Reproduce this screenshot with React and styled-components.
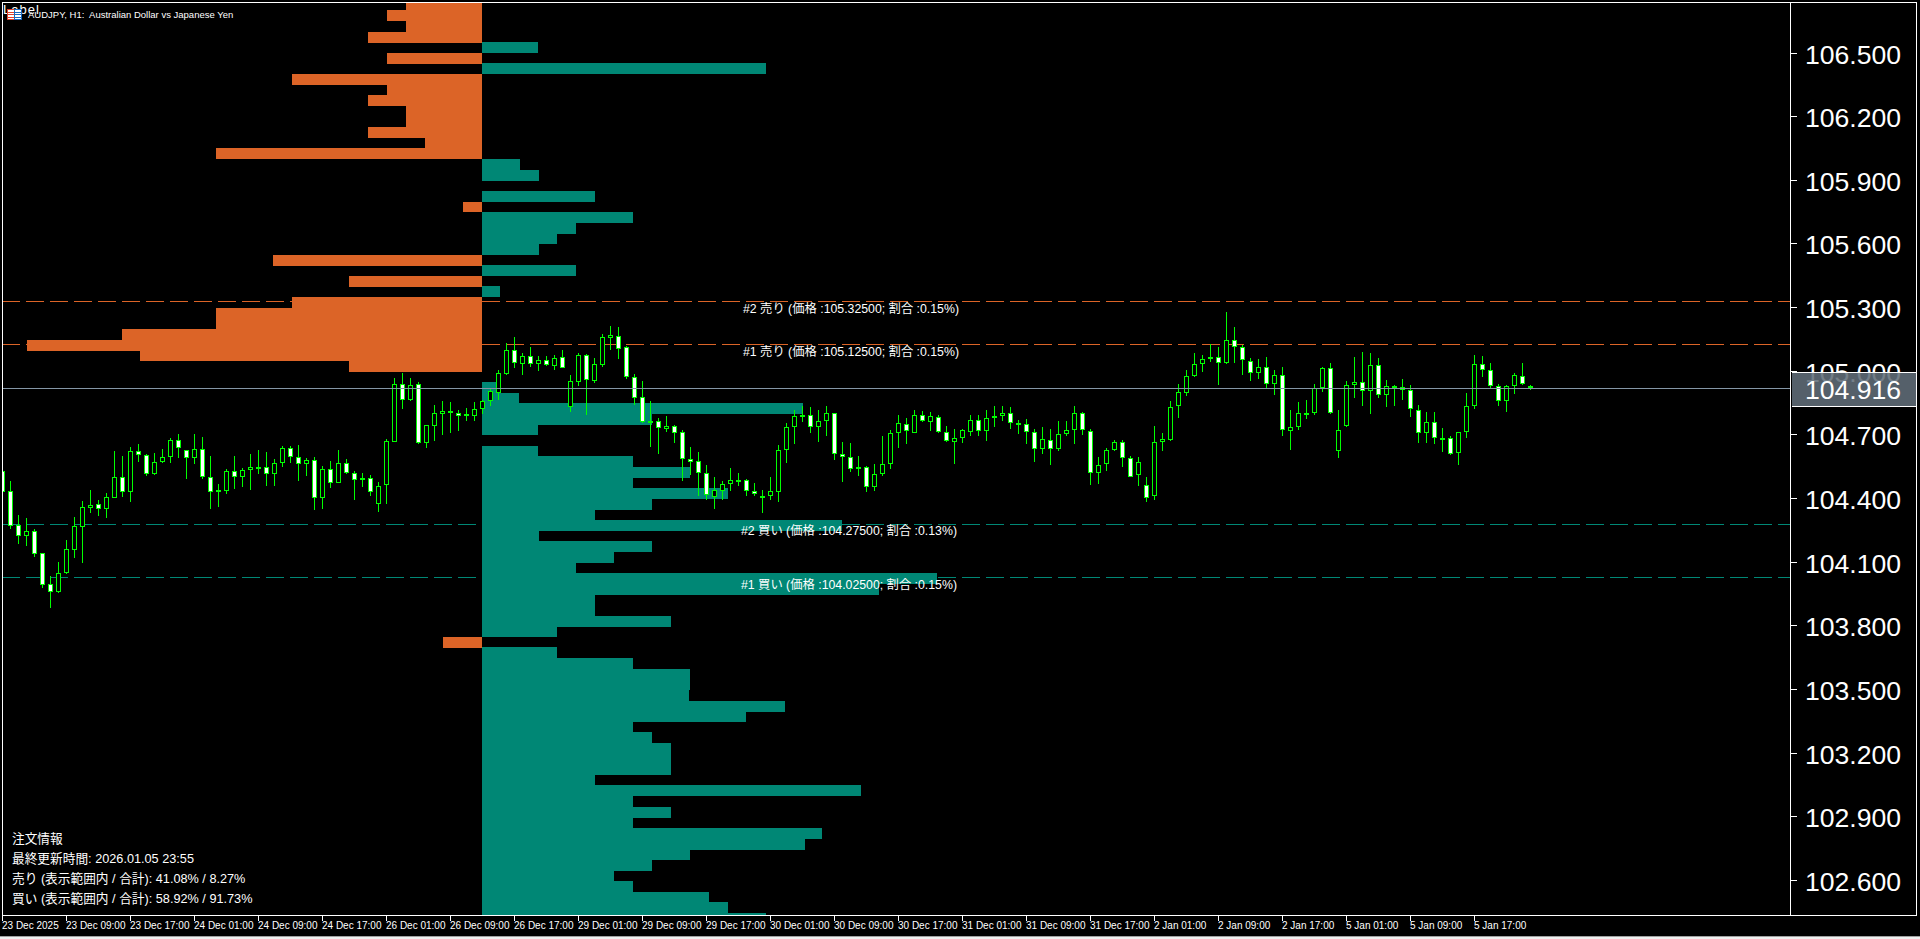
import React from "react";
import styled, { createGlobalStyle } from "styled-components";

const ORANGE = "#dc6427";
const TEAL = "#008775";
const LIME = "#00ff00";
const BAR_ORIGIN = 482;

// order book rows in page pixels: top, bottom, far edge. Edge left of origin = sell, right = buy
const bookRows = [
  [3, 10, 406], [10, 21, 387], [21, 32, 406], [32, 43, 368], [42, 53, 538], [53, 64, 387],
  [63, 74, 766], [74, 85, 292], [85, 95, 387], [95, 106, 368], [106, 127, 406], [127, 138, 368],
  [138, 148, 425], [148, 159, 216], [159, 170, 520], [170, 181, 539], [191, 202, 595], [202, 212, 463],
  [212, 223, 633], [223, 234, 576], [234, 244, 557], [244, 255, 539], [255, 266, 273], [265, 276, 576],
  [276, 287, 349], [286, 297, 500], [297, 308, 292], [308, 329, 216], [329, 340, 122], [340, 351, 27],
  [351, 361, 140], [361, 372, 349], [382, 393, 500], [393, 403, 519], [403, 414, 803], [414, 425, 652],
  [425, 435, 538], [446, 456, 538], [456, 467, 633], [467, 478, 690], [478, 488, 633], [488, 499, 728],
  [499, 510, 652], [510, 520, 595], [520, 531, 842], [531, 541, 539], [541, 552, 652], [552, 563, 614],
  [563, 573, 576], [573, 584, 937], [584, 595, 879], [595, 616, 595], [616, 627, 671], [627, 637, 557],
  [637, 648, 443], [647, 658, 557], [658, 669, 633], [669, 690, 690], [690, 701, 689], [701, 712, 785],
  [712, 722, 746], [722, 732, 633], [732, 743, 652], [743, 775, 671], [775, 785, 595], [785, 796, 861],
  [796, 807, 633], [807, 818, 671], [818, 828, 633], [828, 839, 822], [839, 850, 805], [850, 860, 690],
  [860, 871, 652], [871, 881, 614], [881, 892, 633], [892, 902, 709], [902, 913, 728], [913, 915, 766],
];

// wick top, wick bottom, body top, body bottom, kind (w = up bar, h = down bar)
// values are thirds of a pixel measured from the base line given below
const candlesFrom320 = `
453 515 453 515 w,483 627 514 617 w,585 672 616 647 w,594 678 634 647 h,627 711 634 701 w,
700 803 700 794 w,768 864 793 815 w,726 819 760 815 h,660 762 688 758 h,591 714 619 689 h,
543 729 562 620 h,510 579 556 563 h,540 588 553 568 w,519 594 532 568 h,393 534 472 533 h,
408 531 472 515 w,381 546 394 515 h,372 426 394 406 w,402 468 406 461 w,399 465 427 461 h,
387 429 412 427 h,354 429 361 412 h,342 414 361 385 w,390 477 391 415 w,342 432 388 415 h,
351 477 388 472 w,408 567 472 517 w,492 561 511 517 h,447 522 454 514 h,408 507 454 472 w,
444 501 451 472 h,402 510 442 451 h,390 462 442 443 h,396 498 442 463 w,417 498 430 463 h,
378 441 385 430 h,378 429 385 412 w,375 483 412 433 w,414 468 421 433 h,411 570 421 535 w,
438 567 448 535 h,423 504 448 490 w,390 488 430 488 h,417 463 430 460 w,454 540 460 481 w,
459 501 475 481 h,466 528 475 517 w,486 576 499 553 h,357 552 364 496 h,175 367 193 365 h,
159 267 193 239 w,174 243 196 239 h,186 372 193 368 w,315 384 316 368 h,255 363 280 317 h,
243 345 274 281 h,246 339 274 277 h,270 333 280 287 w,264 303 283 287 h,246 303 268 287 h,
240 283 244 268 h,207 258 214 244 h,150 240 160 218 h,69 165 91 161 h,51 144 91 128 w,
99 165 109 131 h,81 141 109 131 w,108 153 121 131 h,108 138 121 136 w,105 150 115 137 h,
90 144 112 143 w,165 276 184 260 h,99 198 106 185 h,103 285 106 181 w,114 189 133 182 h,
42 141 52 134 h,18 90 46 55 h,21 117 49 86 w,79 177 82 172 w,162 255 172 233 w,
183 309 232 305 w,243 381 304 308 h,294 402 304 325 w,288 336 319 326 h,315 369 319 338 w,
330 483 337 418 w,381 465 418 425 w,396 528 424 460 w,435 540 460 526 w,471 567 511 530 h,
483 540 493 512 h,444 513 481 493 h,459 498 481 482 h,477 528 481 514 w,489 528 514 523 w,
510 579 529 532 h,471 540 514 529 h,375 546 391 515 h,309 429 322 391 h,270 372 289 322 h`;

const candlesFrom280 = `
378 425 404 407 h,381 458 406 442 w,390 486 424 442 h,378 468 400 424 h,400 540 400 523 w,
486 606 523 532 w,489 576 532 568 w,528 588 562 568 h,558 636 562 620 w,552 633 583 620 h,
468 588 553 583 h,450 567 460 553 h,405 504 430 460 h,414 492 431 454 w,390 460 406 458 h,
393 426 406 424 w,396 453 409 425 h,405 459 412 457 w,438 486 455 484 w,447 552 475 487 h,
447 490 451 475 h,405 468 421 455 h,405 468 421 454 w,390 483 415 454 h,378 441 409 415 h,
378 423 400 409 h,381 447 400 430 w,420 462 430 433 h,417 492 433 457 w,448 546 457 508 w,
441 522 478 508 h,447 555 481 508 w,423 513 463 508 h,423 468 451 463 h,378 492 400 451 h,
396 466 400 451 w,447 615 454 580 w,531 612 556 580 h,504 573 511 553 h,480 514 487 511 h,
480 561 487 535 w,528 591 535 590 w,531 618 547 586 h,591 666 616 655 w,438 660 487 649 h,
459 514 478 487 h,363 483 382 481 h,312 414 337 379 h,270 348 289 340 h,220 290 253 289 h,
225 276 238 253 h,192 246 230 238 h,201 315 232 250 w,96 253 181 250 h,141 250 181 202 w,
196 286 202 241 w,235 302 244 280 w,238 298 262 280 h,232 324 262 313 w,270 345 286 313 h,
262 468 286 451 w,390 510 442 454 h,366 450 400 442 h,360 416 400 403 h,312 405 325 400 h,
262 336 265 325 h,250 402 265 400 w,391 534 451 514 h,304 440 316 439 h,232 354 307 316 h,
217 378 307 334 w,219 402 256 334 h,234 354 256 346 w,300 381 319 344 h,316 378 319 324 h,
297 360 322 331 w,315 411 331 388 w,375 489 391 460 w,396 489 427 460 h,396 492 427 475 w,
444 516 475 477 h,468 526 475 523 w,456 555 457 520 h,340 474 379 457 h,225 386 253 379 h,
228 292 253 271 w,250 328 271 319 w,312 378 319 364 w,315 396 319 364 h,280 342 286 319 h`;

const candlesEnd320 = `130 194 167 193 w,196 210 197 205 w`;

const parseCandles = (text, base) =>
  text
    .split(",")
    .map((item) => item.trim())
    .filter(Boolean)
    .map((item) => {
      const parts = item.split(" ");
      const [wickTop, wickBottom, bodyTop, bodyBottom] = parts.slice(0, 4).map((v) => Math.round(base + Number(v) / 3));
      return { wickTop, wickBottom, bodyTop, bodyBottom, up: parts[4] === "w" };
    });

const candles = [
  ...parseCandles(candlesFrom320, 320),
  ...parseCandles(candlesFrom280, 280),
  ...parseCandles(candlesEnd320, 320),
];

const priceLabels = ["106.500", "106.200", "105.900", "105.600", "105.300", "105.000", "104.700", "104.400", "104.100", "103.800", "103.500", "103.200", "102.900", "102.600"];

const timeLabels = ["23 Dec 2025", "23 Dec 09:00", "23 Dec 17:00", "24 Dec 01:00", "24 Dec 09:00", "24 Dec 17:00", "26 Dec 01:00", "26 Dec 09:00", "26 Dec 17:00", "29 Dec 01:00", "29 Dec 09:00", "29 Dec 17:00", "30 Dec 01:00", "30 Dec 09:00", "30 Dec 17:00", "31 Dec 01:00", "31 Dec 09:00", "31 Dec 17:00", "2 Jan 01:00", "2 Jan 09:00", "2 Jan 17:00", "5 Jan 01:00", "5 Jan 09:00", "5 Jan 17:00"];

const orderLines = [
  { y: 301, color: ORANGE, labelLeft: 743, labelTop: 301, text: "#2 売り (価格 :105.32500; 割合 :0.15%)" },
  { y: 344, color: ORANGE, labelLeft: 743, labelTop: 344, text: "#1 売り (価格 :105.12500; 割合 :0.15%)" },
  { y: 524, color: TEAL, labelLeft: 741, labelTop: 523, text: "#2 買い (価格 :104.27500; 割合 :0.13%)" },
  { y: 577, color: TEAL, labelLeft: 741, labelTop: 577, text: "#1 買い (価格 :104.02500; 割合 :0.15%)" },
];

const infoLines = [
  "注文情報",
  "最終更新時間: 2026.01.05 23:55",
  "売り (表示範囲内 / 合計): 41.08% / 8.27%",
  "買い (表示範囲内 / 合計): 58.92% / 91.73%",
];

function ChartDrawing() {
  return (
    <ChartSvg viewBox="3 3 1787 912">
      {orderLines.map((line) => (
        <line key={line.y} x1="2" x2="1790" y1={line.y + 0.5} y2={line.y + 0.5} stroke={line.color} strokeDasharray="18 6" />
      ))}
      {bookRows.map(([top, bottom, edge]) => (
        <rect
          key={top}
          x={Math.min(edge, BAR_ORIGIN)}
          y={top}
          width={Math.abs(edge - BAR_ORIGIN)}
          height={bottom - top}
          fill={edge < BAR_ORIGIN ? ORANGE : TEAL}
        />
      ))}
      {candles.map((c, i) => {
        const px = 2 + i * 8;
        return (
          <g key={i}>
            <rect x={px} y={c.wickTop} width="1" height={c.wickBottom - c.wickTop} fill={LIME} />
            <rect
              x={px - 1.5}
              y={c.bodyTop + 0.5}
              width="4"
              height={Math.max(c.bodyBottom - c.bodyTop - 1, 1)}
              fill={c.up ? "#ffffff" : "#000000"}
              stroke={LIME}
            />
          </g>
        );
      })}
      <rect x="3" y="388" width="1787" height="1" fill="#8496a6" />
    </ChartSvg>
  );
}

function SymbolIcon() {
  return (
    <IconSvg viewBox="0 0 15 11">
      <rect x="0.5" y="0.5" width="7" height="10" fill="#fff" stroke="#e0402a" />
      <rect x="7.5" y="0.5" width="7" height="10" fill="#fff" stroke="#1668c0" />
      <path d="M1 3h6M1 5.5h6M1 8h6" stroke="#e0402a" />
      <path d="M8 3h6M8 5.5h6M8 8h6" stroke="#1668c0" />
    </IconSvg>
  );
}

export default function App() {
  return (
    <>
      <GlobalStyle />
      <Terminal>
        <ChartRow>
          <Plot>
            <ChartDrawing />
            <LabelObject>Label</LabelObject>
            <SymbolHeader>
              <SymbolIcon />
              <SymbolText>AUDJPY, H1:&nbsp; Australian Dollar vs Japanese Yen</SymbolText>
            </SymbolHeader>
            {orderLines.map((line) => (
              <OrderLabel key={line.y} $left={line.labelLeft} $top={line.labelTop}>
                {line.text}
              </OrderLabel>
            ))}
            <InfoPanel>
              {infoLines.map((text) => (
                <InfoLine key={text}>{text}</InfoLine>
              ))}
            </InfoPanel>
          </Plot>
          <PriceAxis>
            {priceLabels.map((price) => (
              <PriceRow key={price}>
                <PriceText>{price}</PriceText>
              </PriceRow>
            ))}
            <CurrentPrice>104.916</CurrentPrice>
          </PriceAxis>
        </ChartRow>
        <TimeAxis>
          {timeLabels.map((label) => (
            <TimeCell key={label}>{label}</TimeCell>
          ))}
        </TimeAxis>
        <StatusEdge />
      </Terminal>
    </>
  );
}

const GlobalStyle = createGlobalStyle`
  html, body {
    margin: 0;
    padding: 0;
    background: #000;
    overflow: hidden;
  }
  * {
    box-sizing: border-box;
  }
`;

const Terminal = styled.div`
  width: 1920px;
  height: 939px;
  background: #000;
  color: #fff;
  padding-top: 2px;
  display: flex;
  flex-direction: column;
  font-family: "Liberation Sans", "Noto Sans CJK JP", sans-serif;
`;

const ChartRow = styled.div`
  display: flex;
  height: 913px;
  margin-left: 2px;
  width: 1915px;
  border-top: 1px solid #fff;
  border-left: 1px solid #fff;
`;

const Plot = styled.div`
  position: relative;
  width: 1787px;
  height: 100%;
  overflow: hidden;
`;

const ChartSvg = styled.svg`
  display: block;
  width: 1787px;
  height: 912px;
  shape-rendering: crispEdges;
`;

const LabelObject = styled.div`
  position: absolute;
  left: 0;
  top: 0;
  font-size: 13px;
  line-height: 14px;
  letter-spacing: 1px;
`;

const SymbolHeader = styled.div`
  position: absolute;
  left: 4px;
  top: 5px;
  display: flex;
  align-items: center;
  gap: 6px;
  height: 12px;
`;

const IconSvg = styled.svg`
  width: 15px;
  height: 11px;
  flex-shrink: 0;
  shape-rendering: crispEdges;
`;

const SymbolText = styled.span`
  font-size: 9.5px;
  white-space: nowrap;
`;

const OrderLabel = styled.div`
  position: absolute;
  left: ${(p) => p.$left - 3}px;
  top: ${(p) => p.$top - 3}px;
  font-size: 12.3px;
  line-height: 17px;
  white-space: nowrap;
`;

const InfoPanel = styled.div`
  position: absolute;
  left: 9px;
  bottom: 6px;
  display: flex;
  flex-direction: column;
`;

const InfoLine = styled.div`
  height: 20px;
  line-height: 20px;
  font-size: 12.7px;
  white-space: nowrap;
`;

const PriceAxis = styled.div`
  position: relative;
  width: 127px;
  height: 100%;
  padding-top: 18.2px;
  border-left: 1px solid #fff;
  border-right: 1px solid #fff;
  display: flex;
  flex-direction: column;
`;

const PriceRow = styled.div`
  display: flex;
  align-items: center;
  gap: 8px;
  height: 63.67px;
  flex-shrink: 0;
  &::before {
    content: "";
    width: 6px;
    height: 1px;
    background: #fff;
  }
`;

const PriceText = styled.span`
  font-size: 26.6px;
  margin-top: 4px;
`;

const CurrentPrice = styled.div`
  position: absolute;
  left: 1px;
  top: 369px;
  width: 124px;
  height: 35px;
  padding-left: 13px;
  background: rgba(97, 109, 121, 0.88);
  border-top: 1px solid #fff;
  border-bottom: 1px solid #fff;
  font-size: 26.6px;
  line-height: 35px;
`;

const TimeAxis = styled.div`
  display: flex;
  height: 21px;
  margin-left: 2px;
  width: 1915px;
  border-top: 1px solid #fff;
  overflow: hidden;
`;

const TimeCell = styled.div`
  position: relative;
  width: 64px;
  flex-shrink: 0;
  font-size: 10px;
  line-height: 20px;
  white-space: nowrap;
  &::before {
    content: "";
    position: absolute;
    left: 0;
    top: 0;
    width: 1px;
    height: 5px;
    background: #fff;
  }
`;

const StatusEdge = styled.div`
  height: 3px;
  background: #f0f0f0;
  border-top: 1px solid #a0a0a0;
`;
